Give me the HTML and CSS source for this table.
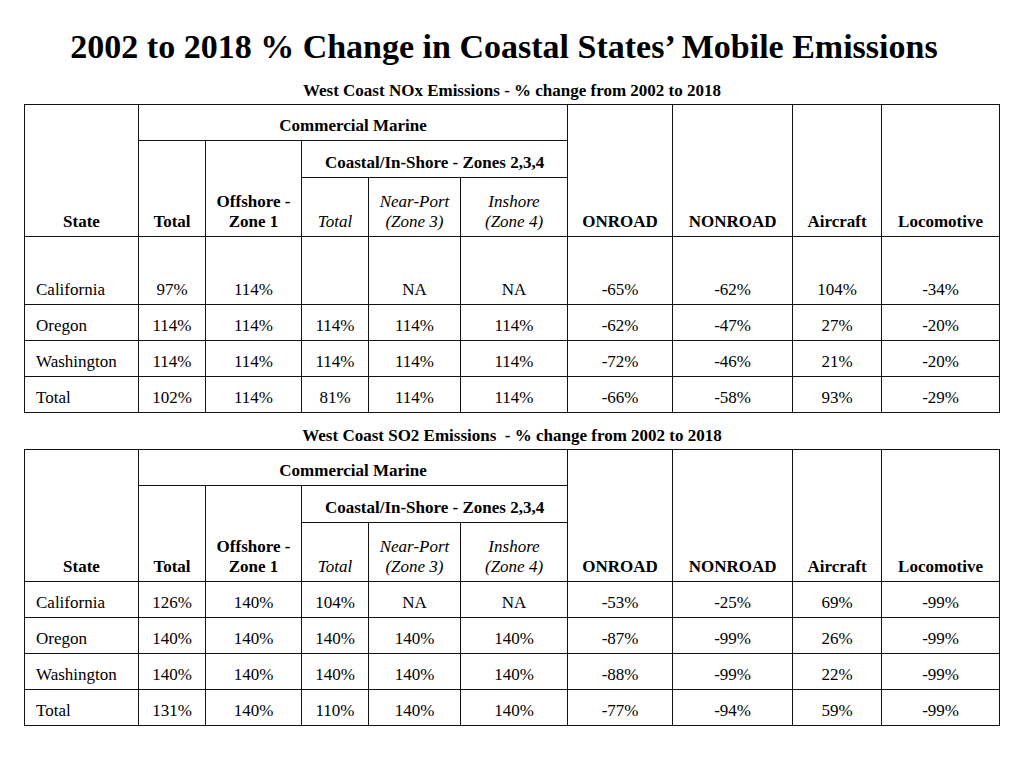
FILE: index.html
```html
<!DOCTYPE html>
<html>
<head>
<meta charset="utf-8">
<link rel="stylesheet" href="styles.css">
</head>
<body>
<div class="page">
  <h1 class="title">2002 to 2018 % Change in Coastal States’ Mobile Emissions</h1>

  <div class="subtitle sub-first">West Coast NOx Emissions - % change from 2002 to 2018</div>
  <table class="grid">
    <colgroup>
      <col class="c-state"><col class="c-total"><col class="c-off"><col class="c-ctot"><col class="c-near"><col class="c-in"><col class="c-on"><col class="c-non"><col class="c-air"><col class="c-loc">
    </colgroup>
    <tr class="r-top">
      <th rowspan="3" class="state">State</th>
      <th colspan="5">Commercial Marine</th>
      <th rowspan="3">ONROAD</th>
      <th rowspan="3">NONROAD</th>
      <th rowspan="3">Aircraft</th>
      <th rowspan="3">Locomotive</th>
    </tr>
    <tr class="r-mid">
      <th rowspan="2">Total</th>
      <th rowspan="2">Offshore -<br>Zone 1</th>
      <th colspan="3">Coastal/In-Shore - Zones 2,3,4</th>
    </tr>
    <tr class="r-low">
      <th class="it">Total</th>
      <th class="it">Near-Port<br>(Zone 3)</th>
      <th class="it">Inshore<br>(Zone 4)</th>
    </tr>
    <tr class="r-tall">
      <td class="name">California</td><td>97%</td><td>114%</td><td></td><td>NA</td><td>NA</td><td>-65%</td><td>-62%</td><td>104%</td><td>-34%</td>
    </tr>
    <tr class="r-row">
      <td class="name">Oregon</td><td>114%</td><td>114%</td><td>114%</td><td>114%</td><td>114%</td><td>-62%</td><td>-47%</td><td>27%</td><td>-20%</td>
    </tr>
    <tr class="r-row">
      <td class="name">Washington</td><td>114%</td><td>114%</td><td>114%</td><td>114%</td><td>114%</td><td>-72%</td><td>-46%</td><td>21%</td><td>-20%</td>
    </tr>
    <tr class="r-row">
      <td class="name">Total</td><td>102%</td><td>114%</td><td>81%</td><td>114%</td><td>114%</td><td>-66%</td><td>-58%</td><td>93%</td><td>-29%</td>
    </tr>
  </table>

  <div class="subtitle sub-second">West Coast SO2 Emissions&nbsp; - % change from 2002 to 2018</div>
  <table class="grid">
    <colgroup>
      <col class="c-state"><col class="c-total"><col class="c-off"><col class="c-ctot"><col class="c-near"><col class="c-in"><col class="c-on"><col class="c-non"><col class="c-air"><col class="c-loc">
    </colgroup>
    <tr class="r-top">
      <th rowspan="3" class="state">State</th>
      <th colspan="5">Commercial Marine</th>
      <th rowspan="3">ONROAD</th>
      <th rowspan="3">NONROAD</th>
      <th rowspan="3">Aircraft</th>
      <th rowspan="3">Locomotive</th>
    </tr>
    <tr class="r-mid">
      <th rowspan="2">Total</th>
      <th rowspan="2">Offshore -<br>Zone 1</th>
      <th colspan="3">Coastal/In-Shore - Zones 2,3,4</th>
    </tr>
    <tr class="r-low">
      <th class="it">Total</th>
      <th class="it">Near-Port<br>(Zone 3)</th>
      <th class="it">Inshore<br>(Zone 4)</th>
    </tr>
    <tr class="r-row">
      <td class="name">California</td><td>126%</td><td>140%</td><td>104%</td><td>NA</td><td>NA</td><td>-53%</td><td>-25%</td><td>69%</td><td>-99%</td>
    </tr>
    <tr class="r-row">
      <td class="name">Oregon</td><td>140%</td><td>140%</td><td>140%</td><td>140%</td><td>140%</td><td>-87%</td><td>-99%</td><td>26%</td><td>-99%</td>
    </tr>
    <tr class="r-row">
      <td class="name">Washington</td><td>140%</td><td>140%</td><td>140%</td><td>140%</td><td>140%</td><td>-88%</td><td>-99%</td><td>22%</td><td>-99%</td>
    </tr>
    <tr class="r-row">
      <td class="name">Total</td><td>131%</td><td>140%</td><td>110%</td><td>140%</td><td>140%</td><td>-77%</td><td>-94%</td><td>59%</td><td>-99%</td>
    </tr>
  </table>
</div>
</body>
</html>
```

FILE: styles.css
```css
html, body {
  margin: 0;
  padding: 0;
  background: #ffffff;
}

body {
  font-family: "Liberation Serif", "Times New Roman", serif;
  color: #000000;
}

.page {
  width: 1024px;
  height: 768px;
  padding: 0 24px;
  box-sizing: border-box;
}

.title {
  margin: 27px 0 0 0;
  padding-right: 16px;
  font-size: 34px;
  line-height: 40px;
  font-weight: bold;
  text-align: center;
}

.subtitle {
  font-size: 17px;
  line-height: 20px;
  font-weight: bold;
  text-align: center;
}

.sub-first {
  margin-top: 14px;
  margin-bottom: 3px;
}

.sub-second {
  margin-top: 13px;
  margin-bottom: 3px;
}

.grid {
  border-collapse: collapse;
  table-layout: fixed;
  width: 975px;
  font-size: 17px;
  line-height: 20px;
}

.grid th,
.grid td {
  border: 1.6px solid #111111;
  padding: 0 4px 4px 4px;
  vertical-align: bottom;
  text-align: center;
  white-space: nowrap;
  overflow: hidden;
}

.grid th {
  font-weight: bold;
}

.grid th.it {
  font-weight: normal;
  font-style: italic;
}

.grid td.name {
  text-align: left;
  padding-left: 11px;
}

.c-state { width: 114px; }
.c-total { width: 67px; }
.c-off { width: 96px; }
.c-ctot { width: 67px; }
.c-near { width: 92px; }
.c-in { width: 107px; }
.c-on { width: 105px; }
.c-non { width: 120px; }
.c-air { width: 89px; }
.c-loc { width: 118px; }

.r-top { height: 36px; }
.r-mid { height: 37px; }
.r-low { height: 59px; }
.r-tall { height: 68px; }
.r-row { height: 36px; }
```
